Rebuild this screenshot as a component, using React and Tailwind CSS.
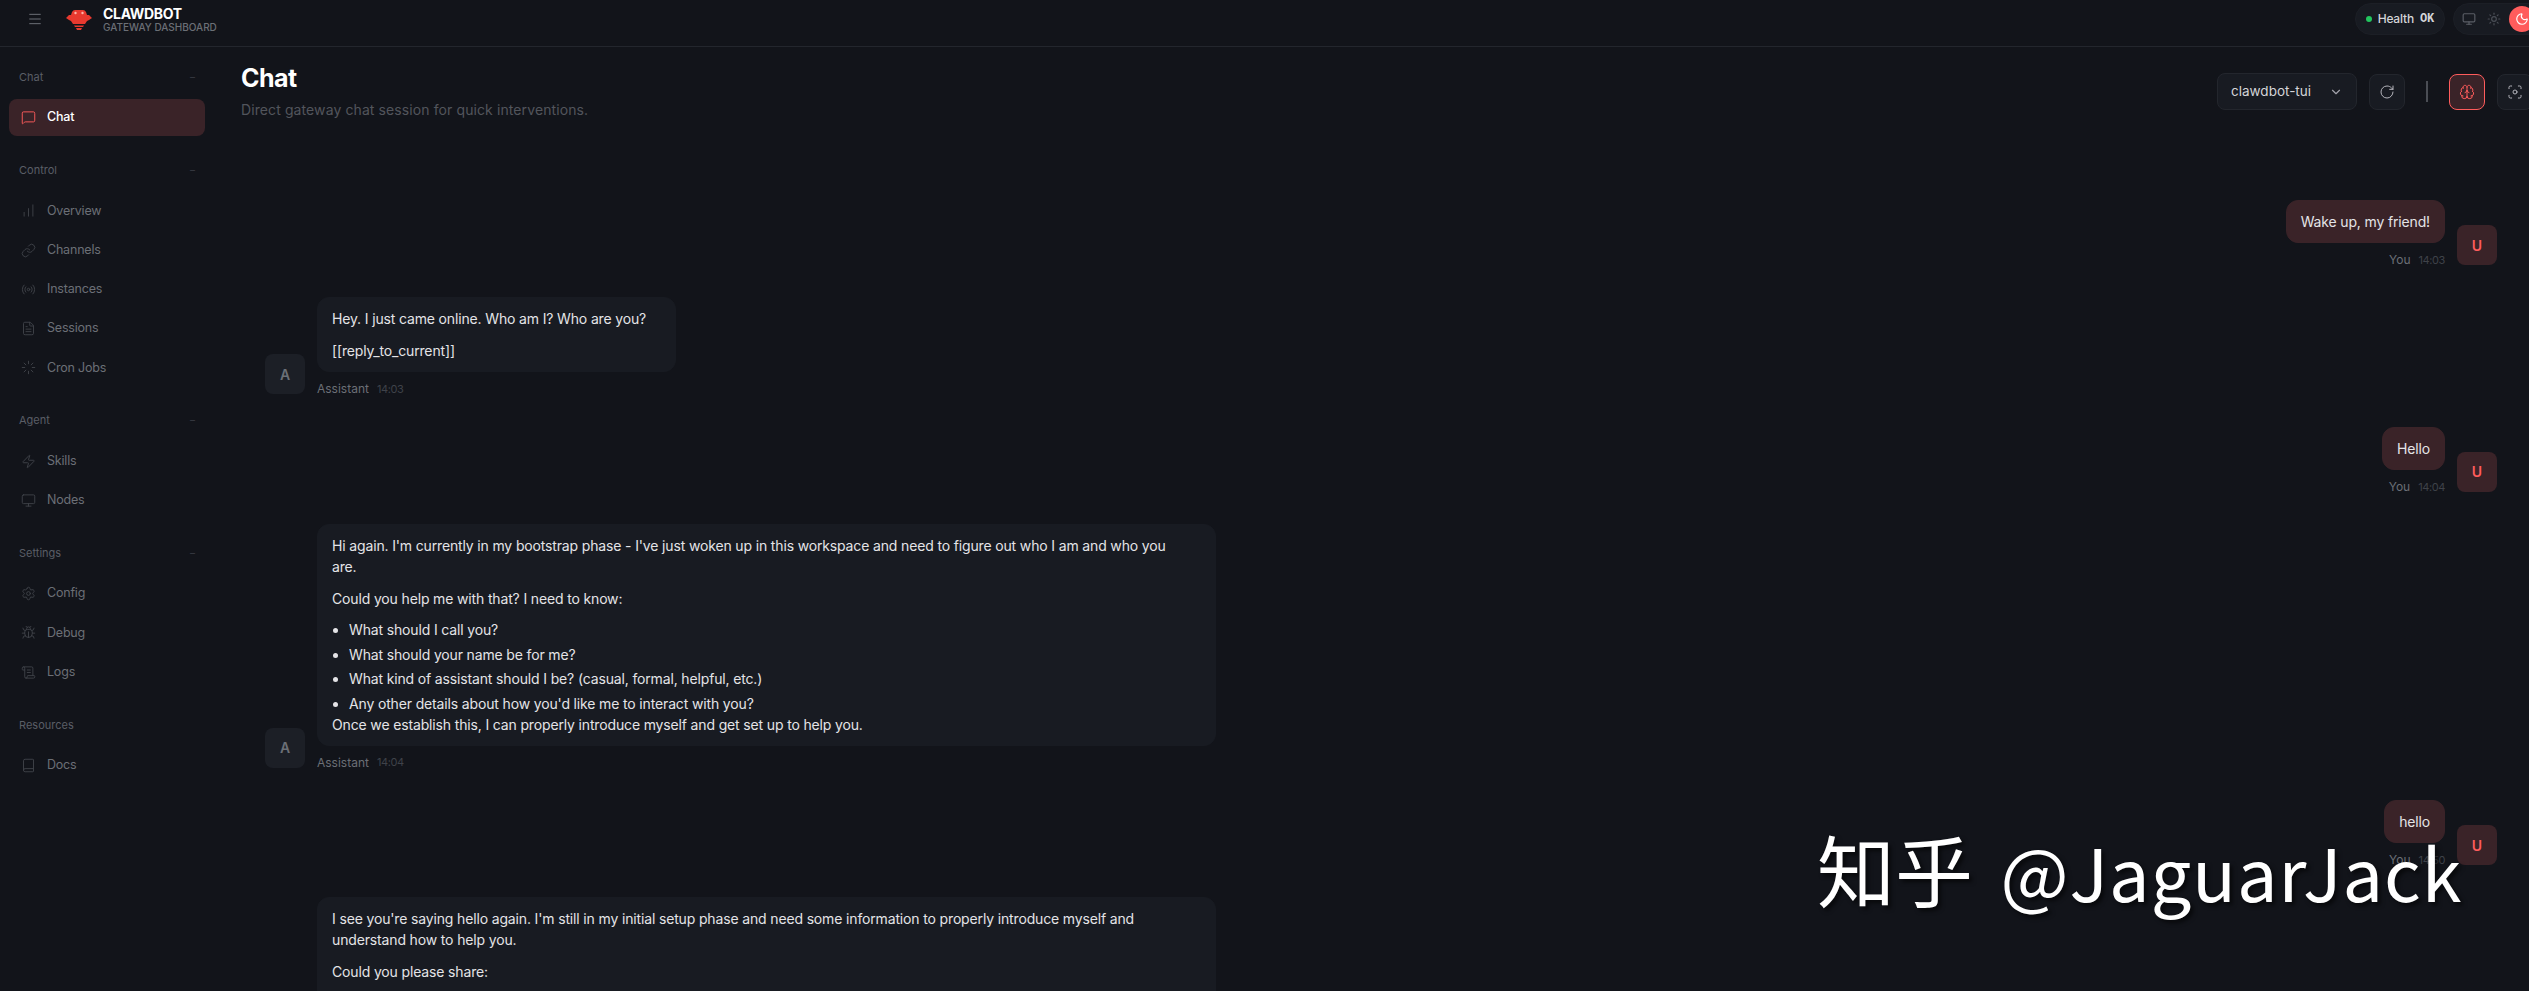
import React from "react";
import {
  Menu, MessageSquare, BarChart, Link, Radio, FileText, Loader, Zap, Monitor,
  Settings, Bug, ScrollText, Book, Sun, Moon, RotateCw, Brain, Focus, ChevronDown,
} from "lucide-react";

const NAV = [
  { label: "Chat", items: [{ name: "Chat", icon: MessageSquare, active: true }] },
  {
    label: "Control",
    items: [
      { name: "Overview", icon: BarChart },
      { name: "Channels", icon: Link },
      { name: "Instances", icon: Radio },
      { name: "Sessions", icon: FileText },
      { name: "Cron Jobs", icon: Loader },
    ],
  },
  {
    label: "Agent",
    items: [
      { name: "Skills", icon: Zap },
      { name: "Nodes", icon: Monitor },
    ],
  },
  {
    label: "Settings",
    items: [
      { name: "Config", icon: Settings },
      { name: "Debug", icon: Bug },
      { name: "Logs", icon: ScrollText },
    ],
  },
  { label: "Resources", collapsible: false, items: [{ name: "Docs", icon: Book }] },
];

function Logo() {
  return (
    <svg width="26" height="22" viewBox="0 0 26 22" className="shrink-0">
      <path d="M6 4Q7 2 9 2H17Q19 2 20 4L21 7H23L26 10L23 12L21 13L19 16H7L5 13L3 12L0 10L3 7H5Z" fill="#e8392f" />
      <path d="M8 17.5H18L17 19H9Z" fill="#e8392f" />
      <path d="M10 20H16L15 22H11Z" fill="#e8392f" />
      <circle cx="9.5" cy="5" r="1.2" fill="#ffb4a8" />
      <circle cx="16.5" cy="5" r="1.2" fill="#ffb4a8" />
    </svg>
  );
}

function Header() {
  return (
    <header className="flex h-[47px] shrink-0 items-center justify-between border-b border-[#23262d] pb-[8px] pl-[27px]">
      <div className="flex items-center">
        <Menu size={16} strokeWidth={1.5} className="text-[#6b6f76]" />
        <div className="ml-[23px] flex items-center gap-[11px]">
          <Logo />
          <div className="flex flex-col">
            <span className="text-[14px] leading-[15px] font-bold tracking-[-0.3px] text-white">CLAWDBOT</span>
            <span className="text-[10px] leading-[12px] font-medium text-[#6b6f76]">GATEWAY DASHBOARD</span>
          </div>
        </div>
      </div>
      <div className="-mr-[16px] flex items-center gap-2">
        <div className="flex h-[32px] w-[90px] items-center justify-center gap-[6px] rounded-full border border-[#1c1f26] bg-[#181b22]">
          <span className="h-[6px] w-[6px] rounded-full bg-[#22c55e]" />
          <span className="text-[12px] font-medium tracking-[-0.2px] text-[#d4d4d8]">Health</span>
          <span className="font-['Liberation_Mono',monospace] text-[12px] font-bold text-[#d4d4d8]">OK</span>
        </div>
        <div className="flex h-[32px] w-[92px] items-center gap-[11px] rounded-full border border-[#1c1f26] bg-[#181b22] pl-[8px]">
          <Monitor size={14} className="text-[#5a5e66]" />
          <Sun size={14} className="text-[#4a4e56]" />
          <span className="-ml-[3px] flex h-[26px] w-[26px] items-center justify-center rounded-full bg-[#ff5c5c]">
            <Moon size={14} className="text-white" />
          </span>
        </div>
      </div>
    </header>
  );
}

function Sidebar() {
  return (
    <aside className="flex w-[220px] shrink-0 flex-col pt-[20px] pl-[9px] pr-[15px]">
      {NAV.map((group) => (
        <div key={group.label} className="mb-[24px]">
          <div className="flex h-[20px] items-center justify-between pr-[10px] pl-[10px] text-[11px] text-[#5a5e66]">
            <span>{group.label}</span>
            {group.collapsible !== false && <span className="text-[10px] text-[#3a3d44]">–</span>}
          </div>
          <div className="mt-[12px] flex flex-col gap-[2px]">
            {group.items.map((it) => {
              const Icon = it.icon;
              return (
                <div
                  key={it.name}
                  className={
                    it.active
                      ? "flex h-[37.25px] items-center gap-[11px] rounded-[8px] bg-[#3a2328] pl-[12px] text-[12.5px] font-medium tracking-[-0.2px] text-white"
                      : "flex h-[37.25px] items-center gap-[11px] rounded-[8px] pl-[12px] text-[12.5px] tracking-[-0.2px] text-[#6b6f76]"
                  }
                >
                  <Icon size={15} strokeWidth={1.5} className={it.active ? "text-[#ff5c5c]" : "text-[#3f4249]"} />
                  <span>{it.name}</span>
                </div>
              );
            })}
          </div>
        </div>
      ))}
    </aside>
  );
}

function Avatar({ user }) {
  return (
    <div
      className={
        user
          ? "flex h-[40px] w-[40px] shrink-0 items-center justify-center rounded-[8px] bg-[#3a2328] text-[14px] font-semibold text-[#ff5c5c]"
          : "flex h-[40px] w-[40px] shrink-0 items-center justify-center rounded-[8px] bg-[#1c1f26] text-[14px] font-semibold text-[#6b6f76]"
      }
    >
      {user ? "U" : "A"}
    </div>
  );
}

function Message({ user, time, width, children }) {
  let bubble = "rounded-[12px] px-[14px] py-[10px] text-[14px] leading-[21px] tracking-[-0.15px] text-[#e4e4e7] border ";
  bubble += user ? "border-[#3a2328] bg-[#3a2328]" : "border-[#181b22] bg-[#181b22]";
  if (width) bubble += " " + width;
  return (
    <div className={user ? "flex items-end justify-end gap-[12px]" : "flex items-end gap-[12px]"}>
      {!user && <Avatar />}
      <div className={user ? "flex flex-col items-end" : "flex flex-col items-start"}>
        <div className={bubble}>{children}</div>
        <div className="mt-[12px] flex h-[10px] items-center gap-[8px]">
          <span className="text-[12px] text-[#6b6f76]">{user ? "You" : "Assistant"}</span>
          <span className="text-[11px] tracking-[-0.4px] text-[#3f4249]">{time}</span>
        </div>
      </div>
      {user && <Avatar user />}
    </div>
  );
}

function Chat() {
  return (
    <div className="flex flex-col gap-[32.4px] pr-[32px] pl-[24px] pt-[80px]">
      <Message user time="14:03">Wake up, my friend!</Message>
      <Message width="w-[359px]" time="14:03">
        <p className="mb-[11px]">Hey. I just came online. Who am I? Who are you?</p>
        <p>[[reply_to_current]]</p>
      </Message>
      <Message user time="14:04">Hello</Message>
      <Message width="w-[899px]" time="14:04">
        <p className="mb-[11px] max-w-[840px]">Hi again. I'm currently in my bootstrap phase - I've just woken up in this workspace and need to figure out who I am and who you are.</p>
        <p className="mb-[10px]">Could you help me with that? I need to know:</p>
        <ul className="list-disc pl-[17px]">
          <li className="mb-[3.5px]">What should I call you?</li>
          <li className="mb-[3.5px]">What should your name be for me?</li>
          <li className="mb-[3.5px]">What kind of assistant should I be? (casual, formal, helpful, etc.)</li>
          <li>Any other details about how you'd like me to interact with you?</li>
        </ul>
        <p>Once we establish this, I can properly introduce myself and get set up to help you.</p>
      </Message>
      <Message user time="14:50">hello</Message>
      <Message width="w-[899px]" time="14:50">
        <p className="mb-[11px] max-w-[840px]">I see you're saying hello again. I'm still in my initial setup phase and need some information to properly introduce myself and understand how to help you.</p>
        <p className="mb-[10px]">Could you please share:</p>
        <ul className="list-disc pl-[17px]">
          <li className="mb-[3.5px]">What should I call you?</li>
          <li className="mb-[3.5px]">What should your name be for me?</li>
        </ul>
      </Message>
    </div>
  );
}

export default function App() {
  return (
    <div className="relative flex h-screen flex-col overflow-hidden bg-[#12141a] font-['Inter','Liberation_Sans',sans-serif] text-[#e4e4e7]">
      <Header />
      <div className="flex min-h-0 flex-1">
        <Sidebar />
        <main className="min-w-0 flex-1 overflow-hidden pl-[21px]">
          <div className="flex items-start justify-between pt-[14px]">
            <div>
              <h1 className="text-[25px] leading-[34px] font-bold tracking-[-0.5px] text-white">Chat</h1>
              <p className="mt-[5px] text-[14px] leading-[20px] tracking-[0.1px] text-[#52555c]">Direct gateway chat session for quick interventions.</p>
            </div>
            <div className="-mr-[4px] mt-[12px] flex items-center gap-[12px]">
              <div className="flex h-[37px] w-[140px] items-center justify-between rounded-[8px] border border-[#23262d] bg-[#181b22] pl-[13px] pr-[13px] text-[13.5px] text-[#d4d4d8]">
                <span>clawdbot-tui</span>
                <ChevronDown size={14} className="text-[#a1a1aa]" />
              </div>
              <button className="flex h-[36px] w-[36px] items-center justify-center rounded-[8px] border border-[#23262d] bg-[#181b22]">
                <RotateCw size={16} strokeWidth={1.5} className="text-[#b4b4bb]" />
              </button>
              <span className="mx-[9px] h-[21px] w-[2px] bg-[#4a4d54]" />
              <button className="flex h-[36px] w-[36px] items-center justify-center rounded-[8px] border border-[#ff5c5c] bg-[#3a2328]">
                <Brain size={16} strokeWidth={1.5} className="text-[#ff5c5c]" />
              </button>
              <button className="flex h-[36px] w-[36px] items-center justify-center rounded-[8px] border border-[#23262d] bg-[#181b22]">
                <Focus size={16} strokeWidth={1.5} className="text-[#b4b4bb]" />
              </button>
            </div>
          </div>
          <Chat />
        </main>
      </div>
      <div className="pointer-events-none absolute top-[813px] left-[1817px] font-['Noto_Sans_CJK_SC',sans-serif] text-[78px] leading-[110px] whitespace-nowrap text-white [text-shadow:3px_3px_4px_rgba(0,0,0,0.6)]">
        知乎 <span className="ml-[10px] text-[72px] tracking-[1px]">@JaguarJack</span>
      </div>
    </div>
  );
}
